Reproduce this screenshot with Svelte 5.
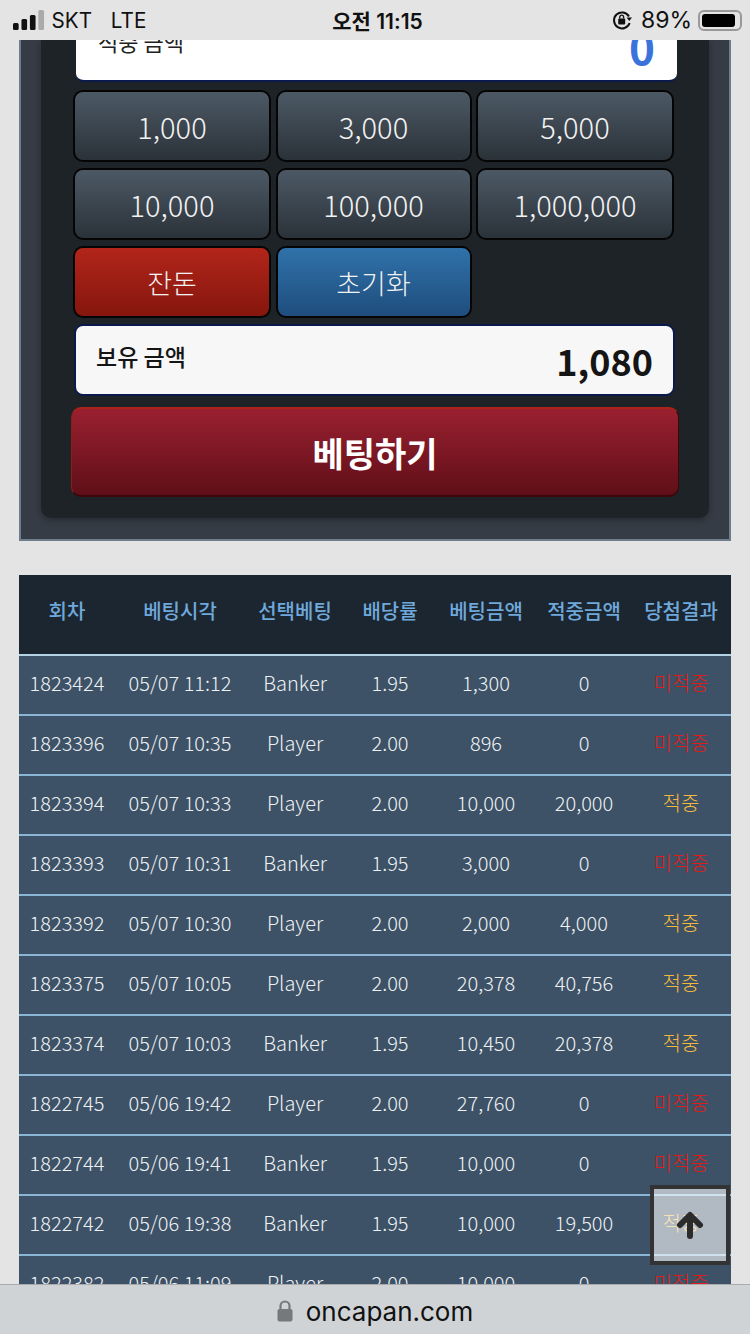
<script lang="ts">
  const amounts = ['1,000', '3,000', '5,000', '10,000', '100,000', '1,000,000'];
  const heads = ['회차', '베팅시각', '선택베팅', '배당률', '베팅금액', '적중금액', '당첨결과'];
  const bets = [
    ['1823424', '05/07 11:12', 'Banker', '1.95', '1,300', '0', '미적중'],
    ['1823396', '05/07 10:35', 'Player', '2.00', '896', '0', '미적중'],
    ['1823394', '05/07 10:33', 'Player', '2.00', '10,000', '20,000', '적중'],
    ['1823393', '05/07 10:31', 'Banker', '1.95', '3,000', '0', '미적중'],
    ['1823392', '05/07 10:30', 'Player', '2.00', '2,000', '4,000', '적중'],
    ['1823375', '05/07 10:05', 'Player', '2.00', '20,378', '40,756', '적중'],
    ['1823374', '05/07 10:03', 'Banker', '1.95', '10,450', '20,378', '적중'],
    ['1822745', '05/06 19:42', 'Player', '2.00', '27,760', '0', '미적중'],
    ['1822744', '05/06 19:41', 'Banker', '1.95', '10,000', '0', '미적중'],
    ['1822742', '05/06 19:38', 'Banker', '1.95', '10,000', '19,500', '적중'],
    ['1822382', '05/06 11:09', 'Player', '2.00', '10,000', '0', '미적중']
  ];
  const widths = [96, 130, 100, 90, 102, 94, 100];
</script>

<div class="screen">
  <header class="status">
    <div class="status-left">
      <svg width="34" height="20" viewBox="0 0 34 20">
        <rect x="0" y="13" width="6" height="7" rx="1.5" fill="#111" />
        <rect x="9" y="9" width="6" height="11" rx="1.5" fill="#111" />
        <rect x="18" y="5" width="6" height="15" rx="1.5" fill="#111" />
        <rect x="27" y="0" width="6" height="20" rx="1.5" fill="#aaa" />
      </svg>
      <span>SKT</span>
      <span class="lte">LTE</span>
    </div>
    <div class="clock">오전 11:15</div>
    <div class="status-right">
      <svg width="20" height="22" viewBox="0 0 20 22" fill="none">
        <path d="M17 7.5A8 8 0 1 0 17.6 14" stroke="#111" stroke-width="2" />
        <path d="M14.5 8.5h5.5l-2.7 3.6z" fill="#111" />
        <rect x="6.2" y="9.5" width="7" height="6" rx="1" fill="#111" />
        <path d="M7.8 9.5V8a1.9 1.9 0 0 1 3.8 0v1.5" stroke="#111" stroke-width="1.4" />
      </svg>
      <span class="pct">89%</span>
      <div class="battery"><i></i></div>
    </div>
  </header>

  <main class="page">
    <section class="panel">
      <div class="board">
        <div class="amount-box">
          <span class="label">적중 금액</span>
          <span class="win">0</span>
        </div>
        <div class="keys">
          {#each amounts as a}
            <button class="key">{a}</button>
          {/each}
          <button class="key red">잔돈</button>
          <button class="key blue">초기화</button>
        </div>
        <div class="held">
          <span class="held-label">보유 금액</span>
          <span class="held-value">1,080</span>
        </div>
        <button class="bet">베팅하기</button>
      </div>
    </section>

    <table class="history">
      <colgroup>
        {#each widths as w}
          <col style="width:{w}px" />
        {/each}
      </colgroup>
      <thead>
        <tr>
          {#each heads as h}
            <th>{h}</th>
          {/each}
        </tr>
      </thead>
      <tbody>
        {#each bets as row}
          <tr>
            {#each row as cell, i}
              <td class:miss={i === 6 && cell === '미적중'} class:hit={i === 6 && cell === '적중'}>{cell}</td>
            {/each}
          </tr>
        {/each}
      </tbody>
    </table>
  </main>

  <button class="to-top" aria-label="top">
    <svg width="30" height="30" viewBox="0 0 30 30" fill="none" stroke="#2b2b2b" stroke-width="6" stroke-linecap="round" stroke-linejoin="round">
      <path d="M15 26V6" />
      <path d="M5 15L15 5l10 10" />
    </svg>
  </button>

  <footer class="urlbar">
    <svg width="16" height="22" viewBox="0 0 16 22" fill="none">
      <path d="M3.5 10V6a4.5 4.5 0 0 1 9 0v4" stroke="#77787c" stroke-width="2.2" />
      <rect x="0.5" y="9" width="15" height="12.5" rx="2" fill="#77787c" />
    </svg>
    <span>oncapan.com</span>
  </footer>
</div>

<style>
  :global(body) {
    margin: 0;
    background: #e4e4e4;
  }

  .screen {
    position: relative;
    width: 750px;
    height: 1334px;
    display: flex;
    flex-direction: column;
    overflow: hidden;
    background: #e4e4e4;
    font-family: "Noto Sans CJK KR", "Noto Sans", sans-serif;
  }

  .status {
    flex: 0 0 40px;
    position: relative;
    z-index: 2;
    display: flex;
    justify-content: space-between;
    align-items: center;
    padding: 0 8px 0 13px;
    background: #e4e4e4;
    color: #111;
    font-family: "Inter", "Noto Sans CJK KR", sans-serif;
    font-size: 22px;
  }

  .status-left {
    display: flex;
    align-items: center;
    gap: 7px;
    width: 240px;
    font-weight: 400;
    transform: scaleX(0.94);
    transform-origin: left;
  }

  .lte {
    margin-left: 13px;
  }

  .clock {
    font-weight: 600;
    font-size: 21px;
  }

  .status-right {
    width: 240px;
    display: flex;
    justify-content: flex-end;
    align-items: center;
    gap: 9px;
  }

  .pct {
    margin-right: -3px;
    font-size: 23px;
  }

  .battery {
    box-sizing: border-box;
    width: 30px;
    width: 30px;
    height: 21px;
    width: 44px;
    padding: 2px;
    border: 2px solid #999;
    border-radius: 6px;
  }

  .battery i {
    display: block;
    width: 33px;
    height: 13px;
    border-radius: 3px;
    background: #000;
  }

  .page {
    flex: 1;
    min-height: 0;
    overflow: hidden;
    padding: 0 19px;
  }

  .panel {
    box-sizing: border-box;
    width: 712px;
    height: 501px;
    padding: 0 20px;
    background: #353c45;
    border: 2px solid #6d7d8c;
    border-top: 0;
  }

  .board {
    box-sizing: border-box;
    height: 478px;
    padding: 0 30px;
    background: #1e2327;
    border-radius: 0 0 10px 10px;
    box-shadow: 0 2px 6px rgba(0, 0, 0, 0.3);
  }

  .amount-box {
    box-sizing: border-box;
    display: flex;
    justify-content: space-between;
    height: 42px;
    margin: 0 2px 8px 5px;
    padding: 0 22px;
    background: #fff;
    border-bottom: 2px solid #0b1a4d;
    border-radius: 0 0 8px 8px;
    overflow: hidden;
  }

  .label {
    margin-top: -15px;
    font-size: 22px;
    line-height: 32px;
    color: #222;
  }

  .win {
    margin-top: -22px;
    font-size: 44px;
    line-height: 56px;
    font-weight: 700;
    color: #3a73dc;
  }

  .keys {
    display: grid;
    grid-template-columns: 198px 196px 198px;
    gap: 6px 4.5px;
    margin-left: 2px;
  }

  .key {
    box-sizing: border-box;
    height: 72px;
    padding: 0;
    border: 2px solid #050505;
    border-radius: 10px;
    background: linear-gradient(#4c5965, #2b3239);
    color: #f2f2f2;
    font-family: inherit;
    font-size: 29px;
    font-weight: 300;
  }

  .red {
    background: linear-gradient(#b2251a, #85160d);
    font-size: 27px;
  }

  .blue {
    background: linear-gradient(#2f72a9, #1f4d7e);
    font-size: 27px;
  }

  .held {
    box-sizing: border-box;
    display: flex;
    justify-content: space-between;
    align-items: center;
    width: 601px;
    height: 72px;
    margin: 6px 0 11px 3px;
    padding: 0 20px;
    background: #f7f7f7;
    border: 2px solid #0b1a4d;
    border-radius: 9px;
    color: #151515;
  }

  .held-label {
    margin-top: -8px;
    font-size: 23px;
    font-weight: 500;
  }

  .held-value {
    font-size: 36px;
    font-weight: 700;
  }

  .bet {
    display: block;
    box-sizing: border-box;
    width: 608px;
    height: 90px;
    padding: 0;
    border: 0;
    border-top: 2px solid #ad2218;
    border-left: 1px solid #8c1d18;
    border-bottom: 2px solid #3c070b;
    border-right: 1px solid #3c070b;
    border-radius: 10px;
    background: linear-gradient(#9a2030, #5f0f18);
    color: #fff;
    font-family: inherit;
    font-size: 34px;
    font-weight: 700;
  }

  .history {
    width: 712px;
    margin-top: 34px;
    border-collapse: collapse;
    table-layout: fixed;
    font-family: "Noto Sans CJK KR", "Noto Sans", sans-serif;
  }

  th {
    height: 71px;
    padding: 0 0 8px;
    background: #1c2630;
    color: #6fa9dc;
    font-size: 20px;
    font-weight: 500;
  }

  tbody tr:first-child td {
    border-top-color: #b5d3e5;
  }

  td {
    box-sizing: border-box;
    height: 60px;
    padding: 0 0 6px;
    background: #3d5266;
    border-top: 2px solid #8ab6d6;
    color: #eef1f4;
    text-align: center;
    font-size: 20px;
    font-weight: 300;
    white-space: nowrap;
  }

  .miss {
    color: #e01c17;
  }

  .hit {
    color: #f5b83d;
  }

  .to-top {
    position: absolute;
    left: 650px;
    top: 1185px;
    z-index: 1;
    box-sizing: border-box;
    width: 80px;
    height: 80px;
    padding: 0;
    display: flex;
    align-items: center;
    justify-content: center;
    background: rgba(255, 255, 255, 0.6);
    border: 4px solid #333;
  }

  .urlbar {
    flex: 0 0 50px;
    position: relative;
    z-index: 2;
    box-sizing: border-box;
    display: flex;
    align-items: center;
    justify-content: center;
    gap: 13px;
    padding-top: 3px;
    background: #d0d3d6;
    border-top: 1px solid #a9abae;
    color: #111;
    font-family: "Inter", sans-serif;
    font-size: 26px;
  }
</style>
